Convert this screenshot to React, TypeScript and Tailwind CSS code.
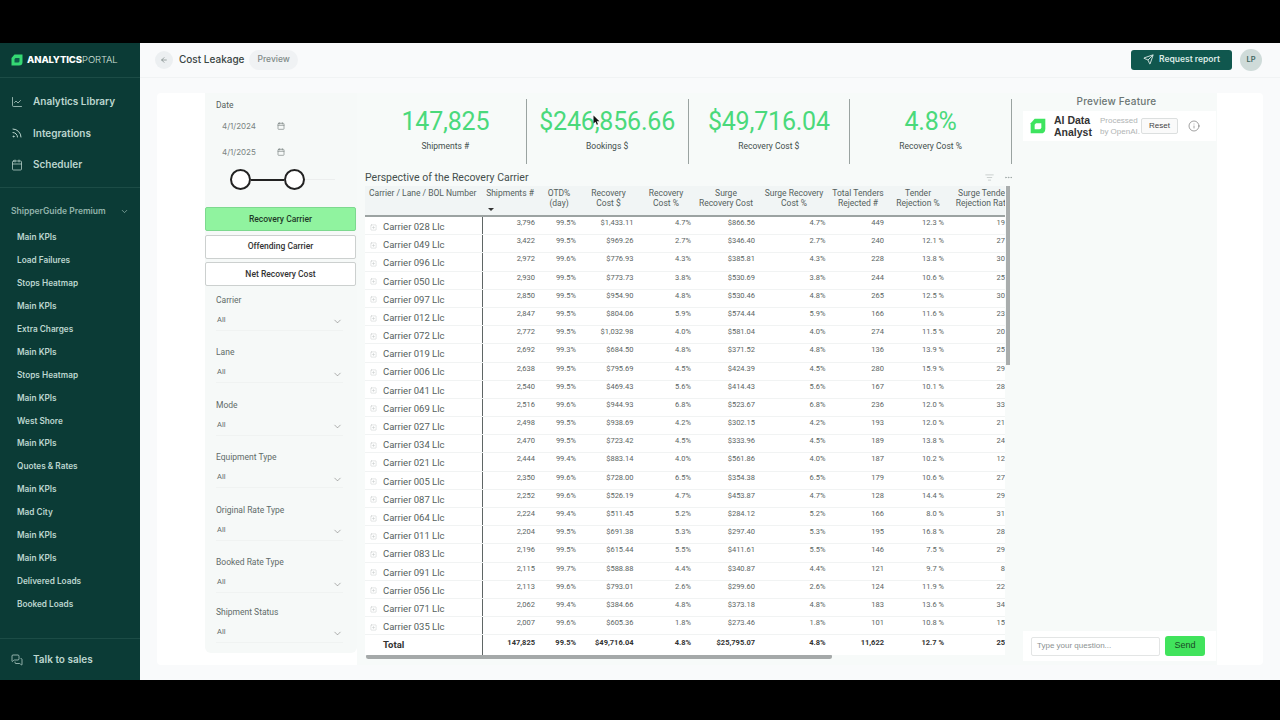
import React from "react";
import { ChartLine, Rss, Calendar, ChevronDown, MessagesSquare, Send, ArrowLeft, Info, ListFilter, Ellipsis, SquarePlus } from "lucide-react";

const rows: string[][] = [
  ["028","3,796","99.5%","$1,433.11","4.7%","$866.56","4.7%","449","12.3 %","19"],
  ["049","3,422","99.5%","$969.26","2.7%","$346.40","2.7%","240","12.1 %","27"],
  ["096","2,972","99.6%","$776.93","4.3%","$385.81","4.3%","228","13.8 %","30"],
  ["050","2,930","99.5%","$773.73","3.8%","$530.69","3.8%","244","10.6 %","25"],
  ["097","2,850","99.5%","$954.90","4.8%","$530.46","4.8%","265","12.5 %","30"],
  ["012","2,847","99.5%","$804.06","5.9%","$574.44","5.9%","166","11.6 %","23"],
  ["072","2,772","99.5%","$1,032.98","4.0%","$581.04","4.0%","274","11.5 %","20"],
  ["019","2,692","99.3%","$684.50","4.8%","$371.52","4.8%","136","13.9 %","25"],
  ["006","2,638","99.5%","$795.69","4.5%","$424.39","4.5%","280","15.9 %","29"],
  ["041","2,540","99.5%","$469.43","5.6%","$414.43","5.6%","167","10.1 %","28"],
  ["069","2,516","99.6%","$944.93","6.8%","$523.67","6.8%","236","12.0 %","33"],
  ["027","2,498","99.5%","$938.69","4.2%","$302.15","4.2%","193","12.0 %","21"],
  ["034","2,470","99.5%","$723.42","4.5%","$333.96","4.5%","189","13.8 %","24"],
  ["021","2,444","99.4%","$883.14","4.0%","$561.86","4.0%","187","10.2 %","12"],
  ["005","2,350","99.6%","$728.00","6.5%","$354.38","6.5%","179","10.6 %","27"],
  ["087","2,252","99.6%","$526.19","4.7%","$453.87","4.7%","128","14.4 %","29"],
  ["064","2,224","99.4%","$511.45","5.2%","$284.12","5.2%","166","8.0 %","31"],
  ["011","2,204","99.5%","$691.38","5.3%","$297.40","5.3%","195","16.8 %","28"],
  ["083","2,196","99.5%","$615.44","5.5%","$411.61","5.5%","146","7.5 %","29"],
  ["091","2,115","99.7%","$588.88","4.4%","$340.87","4.4%","121","9.7 %","8"],
  ["056","2,113","99.6%","$793.01","2.6%","$299.60","2.6%","124","11.9 %","22"],
  ["071","2,062","99.4%","$384.66","4.8%","$373.18","4.8%","183","13.6 %","34"],
  ["035","2,007","99.6%","$605.36","1.8%","$273.46","1.8%","101","10.8 %","15"],
];
const total = ["147,825","99.5%","$49,716.04","4.8%","$25,795.07","4.8%","11,622","12.7 %","25"];

const cols = [
  { w: "w-[54px]", pr: "pr-[2px]" },
  { w: "w-[44px]", pr: "pr-[5px]" },
  { w: "w-[55px]", pr: "pr-[2.5px]" },
  { w: "w-[60px]", pr: "pr-[5px]" },
  { w: "w-[60px]", pr: "pr-[1px]" },
  { w: "w-[76px]", pr: "pr-[6.5px]" },
  { w: "w-[52px]", pr: "pr-0" },
  { w: "w-[68px]", pr: "pr-[8px]" },
  { w: "w-[62px]", pr: "pr-[9px]" },
];

const heads: string[][] = [
  ["Shipments #"],
  ["OTD%", "(day)"],
  ["Recovery", "Cost $"],
  ["Recovery", "Cost %"],
  ["Surge", "Recovery Cost"],
  ["Surge Recovery", "Cost %"],
  ["Total Tenders", "Rejected #"],
  ["Tender", "Rejection %"],
  ["Surge Tender", "Rejection Rate"],
];

const navItems = ["Main KPIs","Load Failures","Stops Heatmap","Main KPIs","Extra Charges","Main KPIs","Stops Heatmap","Main KPIs","West Shore","Main KPIs","Quotes & Rates","Main KPIs","Mad City","Main KPIs","Main KPIs","Delivered Loads","Booked Loads"];
const filters = ["Carrier","Lane","Mode","Equipment Type","Original Rate Type","Booked Rate Type","Shipment Status"];
const kpis = [["147,825","Shipments #"],["$246,856.66","Bookings $"],["$49,716.04","Recovery Cost $"],["4.8%","Recovery Cost %"]];

const din = "font-['Roboto',sans-serif]";

function Logo({ size, color, inner }: { size: number; color: string; inner: string }) {
  return (
    <svg width={size} height={size} viewBox="0 0 24 24">
      <path d="M7 1h16v15q0 7-7 7H1V8z" fill={color} />
      <path d="M9 8h8v6q0 3-3 3H7v-7z" fill={inner} />
    </svg>
  );
}

function NavTop({ icon, label }: { icon: React.ReactNode; label: string }) {
  return (
    <div className="flex items-center h-[31.5px] pl-[11px] gap-[10px] text-[#bcd6cf] text-[10px] font-semibold">
      <span className="w-[12px] flex justify-center">{icon}</span>
      <span>{label}</span>
    </div>
  );
}

export default function App() {
  return (
    <div className="relative w-[1280px] h-[720px] bg-black flex flex-col overflow-hidden font-['Inter',sans-serif]">
      <div className="h-[43px] shrink-0" />
      <div className="h-[637px] flex">
        <aside className="w-[140px] shrink-0 bg-[#0b3b36] flex flex-col">
          <div className="h-[35px] flex items-center pl-[11px] gap-[4px] border-b border-[#1c4c46]">
            <Logo size={12} color="#35d873" inner="#0f5c4a" />
            <span className="text-[9.5px] text-white tracking-[-0.1px]">
              <span className="font-extrabold">ANALYTICS</span>
              <span className="font-light text-[#d5e3df]">PORTAL</span>
            </span>
          </div>
          <div className="h-[110px] pt-[8px] border-b border-[#1c4c46] shrink-0">
            <NavTop icon={<ChartLine size={12} strokeWidth={1.5} />} label="Analytics Library" />
            <NavTop icon={<Rss size={12} strokeWidth={2} />} label="Integrations" />
            <NavTop icon={<Calendar size={12} strokeWidth={1.5} />} label="Scheduler" />
          </div>
          <div className="flex-1 min-h-0 flex flex-col pt-[13px]">
            <div className="flex items-center justify-between pl-[11px] pr-[11px] h-[20px] text-[#92b3ab] text-[8.5px] font-semibold">
              <span>ShipperGuide Premium</span>
              <ChevronDown size={9} />
            </div>
            <div className="flex flex-col pt-[5px]">
              {navItems.map((n, i) => (
                <div key={i} className="h-[22.92px] flex items-center pl-[17px] text-[#bcd6cf] text-[8.25px] font-semibold">{n}</div>
              ))}
            </div>
          </div>
          <div className="h-[42px] shrink-0 border-t border-[#1c4c46] flex items-center">
            <NavTop icon={<MessagesSquare size={12} strokeWidth={1.5} />} label="Talk to sales" />
          </div>
        </aside>

        <main className="flex-1 min-w-0 flex flex-col bg-[#f9fafb]">
          <header className="h-[35px] shrink-0 flex items-center pl-[15px] pr-[18px] pb-[1px] border-b border-[#f1f3f4]">
            <div className="w-[18px] h-[18px] rounded-full bg-[#eceff1] flex items-center justify-center text-[#6f7c7a]">
              <ArrowLeft size={8} />
            </div>
            <span className="ml-[6px] text-[10px] font-medium text-[#3a4543]">Cost Leakage</span>
            <span className="ml-[5px] h-[20px] px-[8px] rounded-full bg-[#f0f2f4] flex items-center text-[8.5px] font-medium text-[#7f8a88]">Preview</span>
            <button className="ml-auto w-[101px] h-[20px] rounded-[3px] bg-[#10574e] text-[#dbeae6] flex items-center justify-center gap-[5px] text-[8.5px] font-semibold">
              <Send size={11} />
              Request report
            </button>
            <div className="ml-[8px] w-[22px] h-[22px] rounded-full bg-[#cfdbd9] flex items-center justify-center text-[7.5px] font-semibold text-[#3f6660]">LP</div>
          </header>

          <div className="flex-1 min-h-0 pl-[17px] pr-[17px] pt-[15px] pb-[15px]">
            <div className="h-full bg-white rounded-[4px] flex pl-[48px] pr-[46px]">
              {/* filters */}
              <div className="w-[152px] h-[560px] shrink-0 flex flex-col bg-[#f6f9f8] rounded-b-[6px]">
                <div className="h-[114px] shrink-0 pt-[7px] pl-[11px] flex flex-col">
                  <span className={`${din} text-[8.5px] text-[#555f5d] h-[10px] leading-[10px]`}>Date</span>
                  <div className="h-[26px] mt-[3px] w-[63px] ml-[6px] flex items-center justify-between text-[8px] text-[#7a8482]">
                    <span>4/1/2024</span>
                    <Calendar size={8} />
                  </div>
                  <div className="h-[26px] w-[63px] ml-[6px] flex items-center justify-between text-[8px] text-[#7a8482]">
                    <span>4/1/2025</span>
                    <Calendar size={8} />
                  </div>
                  <div className="mt-[4px] ml-[14px] flex items-center">
                    <span className="w-[21px] h-[21px] rounded-full border-2 border-[#222] bg-white" />
                    <span className="w-[33px] h-[2px] bg-[#222]" />
                    <span className="w-[21px] h-[21px] rounded-full border-2 border-[#222] bg-white" />
                    <span className="w-[30px] h-px bg-[#eceeee]" />
                  </div>
                </div>
                <div className="flex flex-col gap-[3.5px] pr-[1px]">
                  <div className={`${din} h-[24px] rounded-[2px] border border-[#7dd98f] bg-[#90f39f] flex items-center justify-center text-[8.5px] font-medium text-[#1e3a28]`}>Recovery Carrier</div>
                  <div className={`${din} h-[24px] rounded-[2px] border border-[#ccd0cf] bg-white flex items-center justify-center text-[8.5px] font-medium text-[#333]`}>Offending Carrier</div>
                  <div className={`${din} h-[24px] rounded-[2px] border border-[#ccd0cf] bg-white flex items-center justify-center text-[8.5px] font-medium text-[#333]`}>Net Recovery Cost</div>
                </div>
                <div className="flex flex-col pt-[5.5px]">
                  {filters.map((f, i) => (
                    <div key={f} className={`${i === 6 ? "-mt-[3px]" : ""} h-[52.5px] shrink-0 pl-[11px] pr-[14px] pt-[2px]`}>
                      <div className={`${din} text-[8.5px] text-[#616b69] h-[12px] leading-[12px]`}>{f}</div>
                      <div className={`${din} h-[18px] mt-[7px] pl-[1px] flex items-center justify-between border-b border-[#f0f3f2] text-[7.5px] text-[#5f6a68]`}>
                        <span className="-mt-[3px]">All</span>
                        <ChevronDown size={11} strokeWidth={1} className="text-[#555] mt-[1px]" />
                      </div>
                    </div>
                  ))}
                </div>
              </div>

              <div className="flex-1 min-w-0 flex bg-[#f7faf9]">
                {/* centre */}
                <div className={`${din} w-[660px] shrink-0 pl-[8px] flex flex-col`}>
                  <div className="flex pt-[6px] h-[71px] shrink-0 w-[647px]">
                    {kpis.map(([v, l]) => (
                      <div key={l} className="w-[161.75px] h-[65px] shrink-0 border-r border-[#9aa3a1] flex flex-col items-center">
                        <span className="text-[25px] leading-[30px] mt-[8px] tracking-[-0.2px] text-[#4ad97b]">{v}</span>
                        <span className="text-[8.5px] leading-[10px] mt-[4px] text-[#444f4d]">{l}</span>
                      </div>
                    ))}
                  </div>
                  <div className="h-[15px] shrink-0 mt-[6px] flex items-center justify-between w-[648px]">
                    <span className="text-[10.5px] text-[#454f4d]">Perspective of the Recovery Carrier</span>
                    <span className="flex items-center gap-[10px] text-[#9aa3a1]">
                      <ListFilter size={9} strokeWidth={1.25} />
                      <Ellipsis size={9} />
                    </span>
                  </div>
                  {/* table */}
                  <div className="relative w-[646px] mt-[1px] pr-[6px]">
                    <div className="w-[640px] h-[469px] overflow-hidden relative">
                      <div className="flex h-[31px] bg-[#f1f5f5] border-b-2 border-[#9ca3a2] text-[#555f5d] text-[8.5px] leading-[10px] w-[700px]">
                        <div className="w-[118px] shrink-0 pl-[4px] pt-[2px] relative">Carrier / Lane / BOL Number</div>
                        {heads.map((h, i) => (
                          <div key={i} className={`${cols[i].w} shrink-0 text-center pt-[2px] whitespace-nowrap relative`}>
                            {h.map((t) => <div key={t}>{t}</div>)}
                            {i === 0 && <span className="absolute left-[5px] top-[22px] w-0 h-0 border-l-[3px] border-r-[3px] border-t-[3px] border-l-transparent border-r-transparent border-t-[#333]" />}
                          </div>
                        ))}
                      </div>
                      {rows.map((r) => (
                        <div key={r[0]} className="flex h-[18.2px] border-b border-[#f1f3f3] bg-white w-[700px]">
                          <div className="w-[118px] shrink-0 flex items-center pl-[5px] gap-[6px] border-r border-[#5f6665] text-[9.5px] text-[#555f5d]">
                            <SquarePlus size={7} strokeWidth={1.25} className="text-[#b4bab9] mt-[3px]" />
                            <span className="mt-[3px]">Carrier {r[0]} Llc</span>
                          </div>
                          {r.slice(1).map((v, i) => (
                            <div key={i} className={`${cols[i].w} ${cols[i].pr} shrink-0 text-right text-[7.5px] leading-[10px] pt-[1px] text-[#5b6563]`}>{v}</div>
                          ))}
                        </div>
                      ))}
                      <div className="flex h-[20px] bg-white w-[700px]">
                        <div className="w-[118px] shrink-0 flex items-center pl-[18px] border-r border-[#5f6665] text-[9.5px] font-bold text-[#333]">Total</div>
                        {total.map((v, i) => (
                          <div key={i} className={`${cols[i].w} ${cols[i].pr} shrink-0 text-right text-[7.5px] leading-[10px] pt-[3px] font-bold text-[#333]`}>{v}</div>
                        ))}
                      </div>
                    </div>
                    <div className="absolute right-[1px] top-0 w-[4px] h-[179px] bg-[#a9adad]" />
                    <div className="ml-[1px] w-[466px] h-[5px] rounded-full bg-[#a5a9a9] -mt-[1px]" />
                  </div>
                </div>

                {/* AI panel */}
                <div className="flex-1 min-w-0 flex flex-col pr-[1px]">
                  <div className="h-[18px] pt-[1px] text-center text-[10px] leading-[14px] font-medium tracking-[0.2px] text-[#6b7573]">Preview Feature</div>
                  <div className="h-[30px] ml-[6px] bg-white flex items-center pl-[7px] font-['Liberation_Sans',sans-serif]">
                    <Logo size={16} color="#3ee45f" inner="#ffffff" />
                    <div className="ml-[8px] text-[10.5px] leading-[12.5px] font-bold text-[#333]">AI Data<br />Analyst</div>
                    <div className="ml-[8px] text-[8px] leading-[11px] text-[#b0b4b4]">Processed<br />by OpenAI.</div>
                    <button className="ml-[1px] w-[37px] h-[16px] rounded-[2px] border border-[#dcdfdf] bg-[#fafafa] text-[8px] text-[#444]">Reset</button>
                    <Info size={12} strokeWidth={1} className="ml-[10px] text-[#444]" />
                  </div>
                  <div className="flex-1" />
                  <div className="h-[30px] mb-[4px] ml-[6px] bg-white flex items-center pl-[8px] font-['Liberation_Sans',sans-serif]">
                    <div className="w-[129px] h-[19px] rounded-[2px] border border-[#e3e5e5] flex items-center pl-[5px] text-[8px] text-[#8c9292]">Type your question...</div>
                    <button className="ml-[5px] w-[40px] h-[20px] rounded-[3px] bg-[#41e35c] text-[9px] text-[#1a4a25]">Send</button>
                  </div>
                </div>
              </div>
            </div>
          </div>
        </main>
      </div>
      <div className="h-[40px] shrink-0" />
      <svg className="absolute left-[593px] top-[115px]" width="7" height="11" viewBox="0 0 7 11">
        <path d="M0.5 0.5v8l2-1.8 1.3 3 1.2-.5-1.3-2.9h2.7z" fill="#111" />
      </svg>
    </div>
  );
}
